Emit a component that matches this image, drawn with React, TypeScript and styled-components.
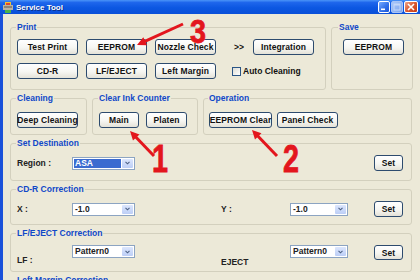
import React from 'react';
import styled, { createGlobalStyle } from 'styled-components';

const GlobalStyle = createGlobalStyle`
  html, body {
    margin: 0;
    padding: 0;
    background: #ECE9D8;
  }
  body {
    font-family: 'Liberation Sans', Arial, sans-serif;
  }
`;

const Window = styled.div`
  position: relative;
  width: 420px;
  height: 280px;
  overflow: hidden;
  background: #ECE9D8;
  display: flex;
  flex-direction: column;
  font-family: 'Liberation Sans', Arial, sans-serif;
  font-size: 8.5px;
  font-weight: bold;
  color: #1a1a1a;
`;

const TitleBar = styled.div`
  height: 14px;
  flex: none;
  display: flex;
  align-items: center;
  padding: 0 2px 0 3px;
  background: linear-gradient(#4A94F8 0%, #1E66EC 18%, #0C57E2 55%, #0A50D8 100%);
`;

const TitleText = styled.span`
  margin-left: 3px;
  color: #fff;
  font-size: 8px;
  text-shadow: 1px 1px 0 #0B2F8A;
`;

const CaptionButtons = styled.div`
  margin-left: auto;
  display: flex;
  gap: 1px;
`;

const CaptionButton = styled.div<{ $kind: 'min' | 'max' | 'close' }>`
  width: ${p => (p.$kind === 'close' ? 14 : 12)}px;
  height: 12px;
  box-sizing: border-box;
  border: 1px solid ${p => (p.$kind === 'max' ? '#A9C4F5' : '#fff')};
  border-radius: 2px;
  display: flex;
  align-items: center;
  justify-content: center;
  background: ${p =>
    p.$kind === 'close'
      ? 'linear-gradient(135deg, #EFA58A 0%, #DA5A33 50%, #C83A12 100%)'
      : p.$kind === 'max'
      ? 'linear-gradient(135deg, #A8C6FA 0%, #7FA6EE 100%)'
      : 'linear-gradient(135deg, #76AAFF 0%, #2E6DE8 60%, #1D57D6 100%)'};
`;

const Body = styled.div`
  flex: 1;
  min-height: 0;
  display: flex;
  flex-direction: column;
  gap: 8px;
  padding: 13px 8px 0 7px;
  border-left: 3px solid #1B52DA;
  overflow: hidden;
`;

const GroupRow = styled.div<{ $h: number; $gap: number }>`
  flex: none;
  display: flex;
  gap: ${p => p.$gap}px;
  height: ${p => p.$h}px;
`;

const Group = styled.div<{ $w?: number; $h?: number; $pl?: number; $pr?: number }>`
  flex: ${p => (p.$w || p.$h ? 'none' : '1')};
  ${p => (p.$w ? `width: ${p.$w}px;` : '')}
  ${p => (p.$h ? `height: ${p.$h}px;` : '')}
  box-sizing: border-box;
  border: 1px solid #D3D0BE;
  border-radius: 3px;
  padding: 0 ${p => p.$pr ?? 8}px 0 ${p => p.$pl ?? 6}px;
`;

const Caption = styled.div`
  width: fit-content;
  margin: -6px 0 0 -1px;
  padding: 0 1px;
  height: 10px;
  line-height: 10px;
  background: #ECE9D8;
  color: #1048C8;
  white-space: nowrap;
`;

const ButtonRow = styled.div<{ $mt: number; $gap?: number }>`
  display: flex;
  align-items: center;
  gap: ${p => p.$gap ?? 8}px;
  margin-top: ${p => p.$mt}px;
  height: 16px;
`;

const Button = styled.div<{ $w: number; $h?: number }>`
  width: ${p => p.$w}px;
  height: ${p => p.$h ?? 16}px;
  flex: none;
  box-sizing: border-box;
  border: 1px solid #2D4B6E;
  border-radius: 3px;
  background: linear-gradient(#FFFFFF 0%, #F6F6F2 55%, #E4E2D8 100%);
  color: #111;
  display: flex;
  align-items: center;
  justify-content: center;
  white-space: nowrap;
  letter-spacing: 0.1px;
`;

const Chevrons = styled.span`
  width: 21px;
  padding-left: 10px;
  box-sizing: border-box;
  flex: none;
  color: #111;
`;

const CheckItem = styled.label`
  display: flex;
  align-items: center;
  gap: 2px;
  margin-left: 8px;
  color: #111;
`;

const CheckBox = styled.span`
  width: 9px;
  height: 9px;
  box-sizing: border-box;
  border: 1px solid #2A5585;
  background: linear-gradient(135deg, #DCDCD4 0%, #FFFFFF 100%);
`;

const FormGrid = styled.div<{ $mt: number; $align?: string }>`
  display: grid;
  grid-template-columns: 55px 63px 86px 69px 58px 1fr 29px;
  align-items: ${p => p.$align ?? 'center'};
  height: 16px;
  margin-top: ${p => p.$mt}px;
`;

const FieldLabel = styled.span<{ $col?: number; $drop?: number }>`
  grid-column: ${p => p.$col ?? 'auto'};
  line-height: 10px;
  padding-top: ${p => p.$drop ?? 0}px;
  color: #222;
  white-space: nowrap;
`;

const Select = styled.div<{ $col: number; $w?: number }>`
  grid-column: ${p => p.$col};
  width: ${p => (p.$w ? `${p.$w}px` : '100%')};
  height: 13px;
  box-sizing: border-box;
  border: 1px solid #8CA4C2;
  background: #fff;
  display: flex;
`;

const SelectText = styled.div<{ $selected?: boolean }>`
  flex: 1;
  margin: 1px 0 1px 1px;
  padding-left: 1px;
  line-height: 9px;
  color: ${p => (p.$selected ? '#fff' : '#222')};
  background: ${p => (p.$selected ? '#3A6BD0' : 'transparent')};
`;

const DropButton = styled.div`
  width: 11px;
  margin: 1px;
  border-radius: 1px;
  background: linear-gradient(#DCE6FD 0%, #BCCEF6 100%);
  display: flex;
  align-items: center;
  justify-content: center;
`;

const SetButton = styled(Button)<{ $col: number }>`
  grid-column: ${p => p.$col};
`;

const Annotations = styled.svg`
  position: absolute;
  top: 0;
  left: 0;
  pointer-events: none;
`;

const RED = '#E3161D';

function arrow(tx: number, ty: number, px: number, py: number) {
  const dx = px - tx;
  const dy = py - ty;
  const l = Math.hypot(dx, dy);
  const ux = dx / l;
  const uy = dy / l;
  const len = 9;
  const half = 4.5;
  const bx = px - ux * len;
  const by = py - uy * len;
  const nx = -uy;
  const ny = ux;
  return (
    <g>
      <line x1={tx} y1={ty} x2={bx + ux} y2={by + uy} stroke={RED} strokeWidth={3} />
      <polygon
        points={`${px},${py} ${bx + nx * half},${by + ny * half} ${bx - nx * half},${by - ny * half}`}
        fill={RED}
      />
    </g>
  );
}

const Drop: React.FC = () => (
  <DropButton>
    <svg width="5" height="4" viewBox="0 0 5 4">
      <path d="M0.5 0.8 L2.5 2.8 L4.5 0.8" fill="none" stroke="#4D6185" strokeWidth="1.1" />
    </svg>
  </DropButton>
);

const App: React.FC = () => {
  return (
    <Window>
      <GlobalStyle />
      <TitleBar>
        <svg width="10" height="11" viewBox="0 0 10 11">
          <rect x="2" y="0" width="6" height="3" fill="#F2C230" />
          <rect x="3" y="1" width="4" height="2" fill="#E0452C" />
          <rect x="0" y="3" width="10" height="5" fill="#B8B2A6" />
          <rect x="1" y="4" width="8" height="2" fill="#8A8478" />
          <rect x="2" y="8" width="6" height="3" fill="#4CB24A" />
        </svg>
        <TitleText>Service Tool</TitleText>
        <CaptionButtons>
          <CaptionButton $kind="min">
            <svg width="8" height="8" viewBox="0 0 8 8">
              <rect x="1" y="5.5" width="4" height="1.6" fill="#fff" />
            </svg>
          </CaptionButton>
          <CaptionButton $kind="max">
            <svg width="8" height="8" viewBox="0 0 8 8">
              <rect x="1" y="1" width="6" height="6" fill="none" stroke="#C5D7F8" strokeWidth="1" />
              <rect x="1" y="1" width="6" height="1.5" fill="#C5D7F8" />
            </svg>
          </CaptionButton>
          <CaptionButton $kind="close">
            <svg width="8" height="8" viewBox="0 0 8 8">
              <path d="M1 1 L7 7 M7 1 L1 7" stroke="#fff" strokeWidth="1.6" />
            </svg>
          </CaptionButton>
        </CaptionButtons>
      </TitleBar>

      <Body>
        <GroupRow $h={63} $gap={5}>
          <Group $w={316}>
            <Caption>Print</Caption>
            <ButtonRow $mt={7}>
              <Button $w={61}>Test Print</Button>
              <Button $w={61}>EEPROM</Button>
              <Button $w={61}>Nozzle Check</Button>
              <Chevrons>&gt;&gt;</Chevrons>
              <Button $w={61}>Integration</Button>
            </ButtonRow>
            <ButtonRow $mt={8}>
              <Button $w={61}>CD-R</Button>
              <Button $w={61}>LF/EJECT</Button>
              <Button $w={61}>Left Margin</Button>
              <CheckItem>
                <CheckBox />
                Auto Cleaning
              </CheckItem>
            </ButtonRow>
          </Group>
          <Group $pl={7}>
            <Caption>Save</Caption>
            <ButtonRow $mt={7}>
              <Button $w={61} style={{ marginLeft: 4 }}>EEPROM</Button>
            </ButtonRow>
          </Group>
        </GroupRow>

        <GroupRow $h={37} $gap={5}>
          <Group $w={77}>
            <Caption>Cleaning</Caption>
            <ButtonRow $mt={9}>
              <Button $w={61}>Deep Cleaning</Button>
            </ButtonRow>
          </Group>
          <Group $w={106}>
            <Caption>Clear Ink Counter</Caption>
            <ButtonRow $mt={9} $gap={7}>
              <Button $w={40}>Main</Button>
              <Button $w={41}>Platen</Button>
            </ButtonRow>
          </Group>
          <Group $pl={5}>
            <Caption>Operation</Caption>
            <ButtonRow $mt={9} $gap={5}>
              <Button $w={63}>EEPROM Clear</Button>
              <Button $w={61}>Panel Check</Button>
            </ButtonRow>
          </Group>
        </GroupRow>

        <Group $h={38}>
          <Caption>Set Destination</Caption>
          <FormGrid $mt={7}>
            <FieldLabel $col={1}>Region :</FieldLabel>
            <Select $col={2}>
              <SelectText $selected>ASA</SelectText>
              <Drop />
            </Select>
            <SetButton $col={7} $w={29}>Set</SetButton>
          </FormGrid>
        </Group>

        <Group $h={36}>
          <Caption>CD-R Correction</Caption>
          <FormGrid $mt={7}>
            <FieldLabel $col={1}>X :</FieldLabel>
            <Select $col={2}>
              <SelectText>-1.0</SelectText>
              <Drop />
            </Select>
            <FieldLabel $col={4}>Y :</FieldLabel>
            <Select $col={5}>
              <SelectText>-1.0</SelectText>
              <Drop />
            </Select>
            <SetButton $col={7} $w={29}>Set</SetButton>
          </FormGrid>
        </Group>

        <Group $h={39}>
          <Caption>LF/EJECT Correction</Caption>
          <FormGrid $mt={7} $align="start">
            <FieldLabel $col={1} $drop={10}>LF :</FieldLabel>
            <Select $col={2}>
              <SelectText>Pattern0</SelectText>
              <Drop />
            </Select>
            <FieldLabel $col={4} $drop={12}>EJECT</FieldLabel>
            <Select $col={5}>
              <SelectText>Pattern0</SelectText>
              <Drop />
            </Select>
            <SetButton $col={7} $w={29} $h={15}>Set</SetButton>
          </FormGrid>
        </Group>

        <Group $h={30}>
          <Caption>Left Margin Correction</Caption>
        </Group>
      </Body>

      <Annotations width="420" height="280" viewBox="0 0 420 280">
        {arrow(183, 24, 137, 45)}
        {arrow(154, 156, 130, 131)}
        {arrow(277, 156, 252, 130)}
        <text
          x="190"
          y="43"
          fontFamily="'Liberation Sans', Arial, sans-serif"
          fontWeight="bold"
          fontSize="34"
          fill={RED}
          stroke={RED}
          strokeWidth="0.8"
          textLength="16"
          lengthAdjust="spacingAndGlyphs"
        >
          3
        </text>
        <text
          x="152"
          y="172"
          fontFamily="'Liberation Sans', Arial, sans-serif"
          fontWeight="bold"
          fontSize="39"
          fill={RED}
          stroke={RED}
          strokeWidth="0.8"
          textLength="16"
          lengthAdjust="spacingAndGlyphs"
        >
          1
        </text>
        <text
          x="283"
          y="172"
          fontFamily="'Liberation Sans', Arial, sans-serif"
          fontWeight="bold"
          fontSize="38"
          fill={RED}
          stroke={RED}
          strokeWidth="0.8"
          textLength="16"
          lengthAdjust="spacingAndGlyphs"
        >
          2
        </text>
      </Annotations>
    </Window>
  );
};

export default App;
